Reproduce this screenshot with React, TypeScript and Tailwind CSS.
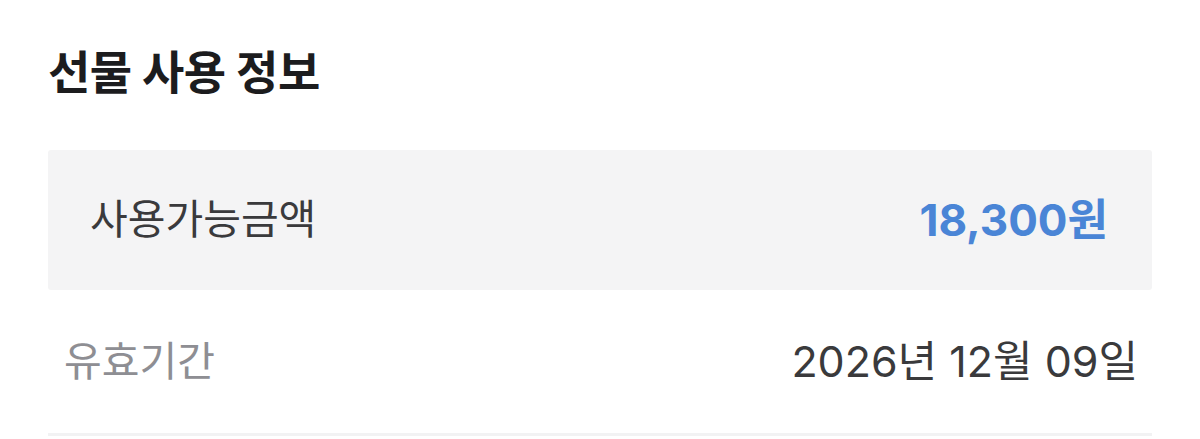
import React from "react";

const font = { fontFamily: 'Inter, "Noto Sans CJK KR", "Noto Sans", sans-serif' };

const App: React.FC = () => {
  return (
    <div className="min-h-screen bg-white" style={font}>
      <div className="pl-[48px] pr-[48px] pt-[42px]">
        <h2 className="text-[46px] leading-[60px] font-bold text-[#1c1c1e] tracking-[-0.5px]">
          선물 사용 정보
        </h2>

        {/* balance row */}
        <div className="mt-[48px] h-[140px] bg-[#f4f4f5] rounded-[3px] flex items-center justify-between pl-[42px] pr-[44px]">
          <span className="text-[41px] text-[#3a3a3c]">사용가능금액</span>
          <span className="text-[44px] font-bold text-[#4a85d6]">18,300원</span>
        </div>

        {/* expiry row */}
        <div className="h-[146px] flex items-center justify-between pl-[16px] pr-[14px] border-b-[3px] border-[#f2f2f3]">
          <span className="text-[41px] text-[#8e8e93]">유효기간</span>
          <span className="text-[43px] text-[#3a3a3c]">2026년 12월 09일</span>
        </div>
      </div>
    </div>
  );
};

export default App;
